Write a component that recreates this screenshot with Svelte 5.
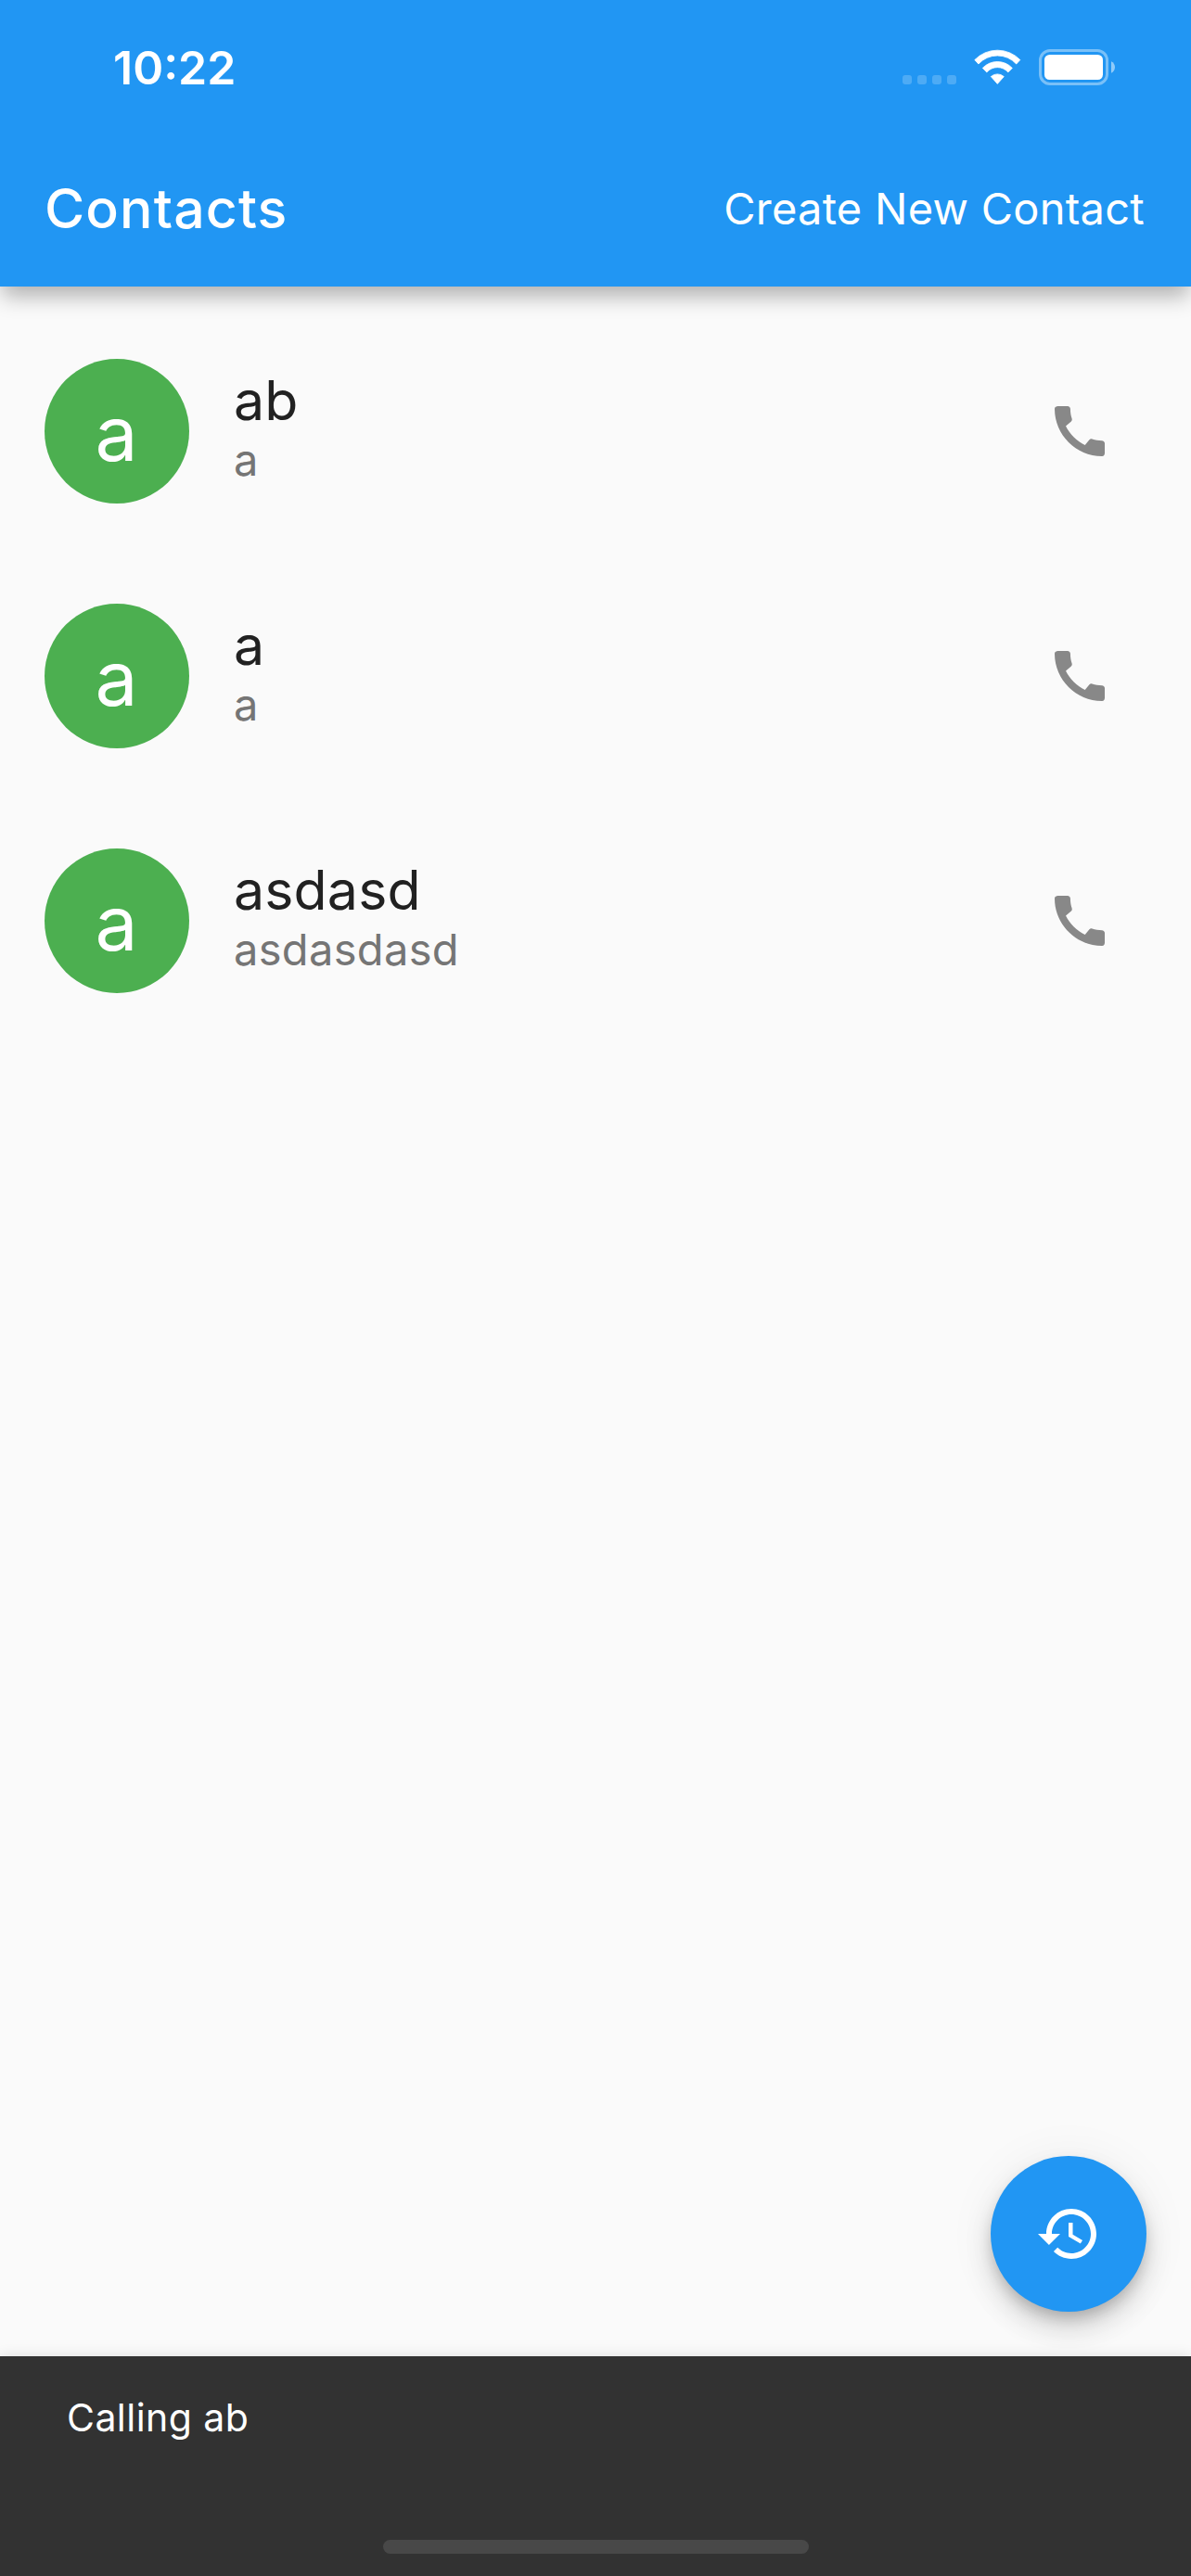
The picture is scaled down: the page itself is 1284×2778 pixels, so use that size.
<script>
  const contacts = [
    { name: 'ab', detail: 'a' },
    { name: 'a', detail: 'a' },
    { name: 'asdasd', detail: 'asdasdasd' }
  ];
  const signalDots = [0, 16, 32, 48];
</script>

<div class="screen">
  <header>
    <div class="status">
      <span class="time">10:22</span>
      <div class="indicators">
        <svg width="58" height="39" viewBox="0 0 58 39" fill="#fff" fill-opacity="0.2">
          {#each signalDots as x}
            <rect {x} y="28" width="10" height="10" rx="3" />
          {/each}
        </svg>
        <svg width="51" height="39" viewBox="0 0 51 39" fill="#fff" stroke="#fff" stroke-width="0.8" stroke-linejoin="round">
          <path d="M.8 11.6A34 34 0 0 1 49.8 11.6L45.7 16A27.6 27.6 0 0 0 4.9 16Z" />
          <path d="M9.3 20.4A22 22 0 0 1 41.3 20.4L36.8 24.9A15.2 15.2 0 0 0 13.8 24.9Z" />
          <path d="M18.3 29.6A10.4 10.4 0 0 1 32.3 29.6L25.3 37.4Z" />
        </svg>
        <svg width="82" height="39" viewBox="0 0 82 39">
          <rect x="1.5" y="1.5" width="72" height="36" rx="10.5" fill="none" stroke="#fff" stroke-opacity="0.4" stroke-width="3" />
          <rect x="6" y="6" width="63" height="27" rx="5.5" fill="#fff" />
          <path d="M78 13.2C80.4 14.2 82 16.7 82 19.5S80.4 24.8 78 25.8Z" fill="#fff" fill-opacity="0.5" />
        </svg>
      </div>
    </div>
    <div class="appbar">
      <h1>Contacts</h1>
      <button class="create">Create New Contact</button>
    </div>
  </header>

  <main>
    {#each contacts as contact}
      <div class="row">
        <div class="avatar">{contact.name[0]}</div>
        <div class="text">
          <div class="name">{contact.name}</div>
          <div class="detail">{contact.detail}</div>
        </div>
        <button class="call" aria-label="Call">
          <svg width="72" height="72" viewBox="0 0 24 24" fill="#888">
            <path d="M20.01 15.38c-1.23 0-2.42-.2-3.53-.56-.35-.12-.74-.03-1.01.24l-1.57 1.97c-2.83-1.35-5.48-3.9-6.89-6.83l1.95-1.66c.27-.28.35-.67.24-1.02-.37-1.11-.56-2.3-.56-3.53 0-.54-.45-.99-.99-.99H4.19C3.65 3 3 3.24 3 3.99 3 13.28 10.73 21 20.01 21c.71 0 .99-.63.99-1.18v-3.45c0-.54-.45-.99-.99-.99z" />
          </svg>
        </button>
      </div>
    {/each}
    <button class="fab" aria-label="History">
      <svg width="72" height="72" viewBox="0 0 24 24" fill="#fff">
        <path d="M13 3c-4.97 0-9 4.03-9 9H1l3.89 3.89.07.14L9 12H6c0-3.87 3.13-7 7-7s7 3.13 7 7-3.13 7-7 7c-1.93 0-3.68-.79-4.94-2.06l-1.42 1.42C8.27 19.99 10.51 21 13 21c4.97 0 9-4.03 9-9s-4.03-9-9-9zm-1 5v5l4.28 2.54.72-1.21-3.5-2.08V8H12z" />
      </svg>
    </button>
  </main>

  <footer>
    <span>Calling ab</span>
    <div class="home"></div>
  </footer>
</div>

<style>
  :global(body) {
    margin: 0;
  }
  .screen {
    width: 1284px;
    height: 2778px;
    display: flex;
    flex-direction: column;
    overflow: hidden;
    background: #fafafa;
    font-family: Inter, 'Liberation Sans', sans-serif;
    font-weight: 400;
  }
  button {
    margin: 0;
    padding: 0;
    border: 0;
    background: none;
    font: inherit;
    color: inherit;
  }
  svg {
    display: block;
  }
  header {
    flex: none;
    height: 309px;
    background: #2196f3;
    color: #fff;
    box-shadow: 0 12px 22px -2px rgba(0, 0, 0, 0.3);
  }
  .status {
    box-sizing: border-box;
    height: 141px;
    padding: 43px 82px 0 122px;
    display: flex;
    justify-content: space-between;
    align-items: flex-start;
  }
  .time {
    font-size: 50px;
    line-height: 60px;
    font-weight: 600;
  }
  .indicators {
    display: flex;
    gap: 19px;
    padding-top: 10px;
  }
  .appbar {
    box-sizing: border-box;
    height: 168px;
    padding: 0 48px 1px;
    display: flex;
    justify-content: space-between;
    align-items: center;
  }
  h1 {
    margin: 0;
    font-size: 59px;
    line-height: 71px;
    font-weight: 500;
    letter-spacing: 1.1px;
  }
  .create {
    font-size: 47px;
    line-height: 57px;
    letter-spacing: 0.26px;
    padding-right: 2px;
  }
  main {
    flex: 1;
    position: relative;
    padding-top: 24px;
  }
  .row {
    box-sizing: border-box;
    height: 264px;
    padding: 0 84px 0 48px;
    display: flex;
    align-items: center;
  }
  .avatar {
    box-sizing: border-box;
    width: 156px;
    height: 156px;
    padding: 5px 1px 0 0;
    border-radius: 50%;
    background: #4caf50;
    color: #fff;
    display: flex;
    align-items: center;
    justify-content: center;
    font-size: 82px;
    line-height: 99px;
  }
  .text {
    flex: 1;
    padding: 0 0 10px 48px;
  }
  .name {
    font-size: 59px;
    line-height: 71px;
    letter-spacing: 0.15px;
    color: #212121;
  }
  .detail {
    font-size: 47px;
    line-height: 57px;
    letter-spacing: 0.33px;
    color: #757575;
  }
  .fab {
    position: absolute;
    right: 48px;
    bottom: 48px;
    width: 168px;
    height: 168px;
    border-radius: 50%;
    background: #2196f3;
    display: flex;
    align-items: center;
    justify-content: center;
    box-shadow:
      0 9px 15px -3px rgba(0, 0, 0, 0.2),
      0 18px 30px rgba(0, 0, 0, 0.14),
      0 3px 54px rgba(0, 0, 0, 0.06);
  }
  footer {
    box-sizing: border-box;
    flex: none;
    height: 237px;
    padding: 41px 72px 24px;
    display: flex;
    flex-direction: column;
    justify-content: space-between;
    background: #323232;
    color: #fff;
    font-size: 41px;
    line-height: 50px;
    letter-spacing: 0.45px;
    box-shadow: 0 0 14px rgba(0, 0, 0, 0.12);
    position: relative;
  }
  .home {
    align-self: center;
    width: 459px;
    height: 15px;
    border-radius: 8px;
    background: #484848;
  }
</style>
